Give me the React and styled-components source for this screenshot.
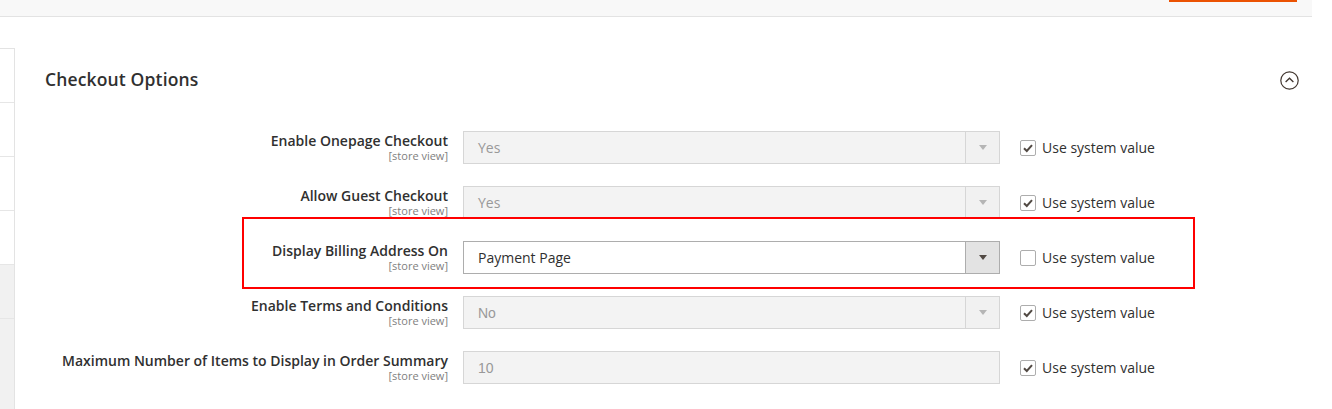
import { Fragment } from "react"
import styled, { createGlobalStyle } from "styled-components"

const GlobalStyle = createGlobalStyle`
    html, body {
        margin: 0;
        padding: 0;
        background: #fff;
        font-family: "Open Sans", "Liberation Sans", sans-serif;
        color: #303030;
    }
    * { box-sizing: border-box; }
`

const TopBar = styled.div`
    position: relative;
    height: 17px;
    margin-right: 20px;
    background: #f8f8f8;
    border-bottom: 1px solid #e3e3e3;
`

const SaveButtonEdge = styled.div`
    position: absolute;
    top: 0;
    left: 1169px;
    width: 128px;
    height: 2px;
    background: #eb5202;
`

const Main = styled.div`
    display: flex;
    align-items: stretch;
    height: 392px;
`

const Sidebar = styled.div`
    width: 15px;
    margin-top: 31px;
    border-right: 1px solid #e3e3e3;
    border-top: 1px solid #e3e3e3;
    display: flex;
    flex-direction: column;
    background: #f1f1f1;
`

const SideItem = styled.div`
    height: 54px;
    flex-shrink: 0;
    border-bottom: 1px solid #e6e6e6;
    background: ${p => (p.$shade ? "#f1f1f1" : "#fff")};
`

const Content = styled.div`
    flex: 1;
    position: relative;
    padding: 43px 33px 0 30px;
`

const Header = styled.div`
    display: flex;
    align-items: center;
    justify-content: space-between;
    height: 36px;
    padding-top: 1px;
`

const Title = styled.h2`
    margin: 0;
    font-size: 17.5px;
    font-weight: 600;
    color: #303030;
    letter-spacing: 0.15px;
`

const Toggle = styled.button`
    width: 19px;
    height: 19px;
    margin-top: 3px;
    padding: 0;
    border: 0;
    background: transparent;
    display: flex;
    cursor: pointer;
`

const Form = styled.div`
    position: relative;
    margin-top: 35px;
    display: grid;
    grid-template-columns: 403px 537px auto;
    column-gap: 15px;
    row-gap: 22px;
`

const LabelCell = styled.div`
    text-align: right;
    padding-top: 2px;
`

const Label = styled.div`
    font-size: 14px;
    font-weight: 600;
    line-height: 1.2;
    color: #303030;
`

const Scope = styled.div`
    margin-top: -1px;
    font-size: 11px;
    line-height: 1.2;
    color: #808080;
`

const Control = styled.div`
    height: 33px;
    display: flex;
    align-items: stretch;
    background: ${p => (p.$disabled ? "#f3f3f3" : "#fff")};
    border: 1px solid ${p => (p.$disabled ? "#d6d6d6" : "#adadad")};
`

const Value = styled.div`
    flex: 1;
    display: flex;
    align-items: center;
    padding: ${p => (p.$arial ? "1px 14px 0" : "0 14px 1px")};
    font-size: 14px;
    font-family: ${p => (p.$arial ? '"Liberation Sans", Arial, sans-serif' : '"Open Sans", sans-serif')};
    color: ${p => (p.$disabled ? "#999" : "#303030")};
`

const ArrowBox = styled.div`
    width: 34px;
    display: flex;
    align-items: center;
    justify-content: center;
    border-left: 1px solid ${p => (p.$disabled ? "#d6d6d6" : "#adadad")};
    background: ${p => (p.$disabled ? "#f1f1f1" : "#e3e3e3")};
`

const Arrow = styled.span`
    width: 0;
    height: 0;
    border-left: 4px solid transparent;
    border-right: 4px solid transparent;
    border-top: 5px solid ${p => (p.$disabled ? "#b5b5b5" : "#514943")};
`

const SystemCell = styled.label`
    display: flex;
    align-items: center;
    gap: 6px;
    padding-left: 5px;
    padding-bottom: 1px;
    height: 33px;
    font-size: 14px;
    color: #303030;
`

const Box = styled.span`
    width: 16px;
    height: 16px;
    border: 1px solid #adadad;
    border-radius: 2px;
    background: #fff;
    display: flex;
    align-items: center;
    justify-content: center;
    margin-top: 2px;
`

const Highlight = styled.div`
    position: absolute;
    left: 197px;
    top: 86px;
    width: 953px;
    height: 72px;
    border: 2px solid #f00;
    pointer-events: none;
`

const rows = [
    { label: "Enable Onepage Checkout", value: "Yes", type: "select", disabled: true, checked: true },
    { label: "Allow Guest Checkout", value: "Yes", type: "select", disabled: true, checked: true },
    { label: "Display Billing Address On", value: "Payment Page", type: "select", disabled: false, checked: false },
    { label: "Enable Terms and Conditions", value: "No", type: "select", disabled: true, checked: true, arial: true },
    { label: "Maximum Number of Items to Display in Order Summary", value: "10", type: "text", disabled: true, checked: true, arial: true },
]

function Checkbox({ checked }) {
    return (
        <Box>
            {checked && (
                <svg width="12" height="12" viewBox="0 0 12 12">
                    <polyline points="2,6.2 4.8,9 10,3.2" fill="none" stroke="#514943" strokeWidth="2" />
                </svg>
            )}
        </Box>
    )
}

export default function App() {
    return (
        <>
            <GlobalStyle />
            <TopBar>
                <SaveButtonEdge />
            </TopBar>
            <Main>
                <Sidebar>
                    <SideItem />
                    <SideItem />
                    <SideItem />
                    <SideItem />
                    <SideItem $shade />
                </Sidebar>
                <Content>
                    <Header>
                        <Title>Checkout Options</Title>
                        <Toggle aria-label="Collapse">
                            <svg width="19" height="19" viewBox="0 0 19 19">
                                <circle cx="9.5" cy="9.5" r="8.7" fill="none" stroke="#41362f" strokeWidth="1.2" />
                                <polyline points="5.6,11 9.5,7.2 13.4,11" fill="none" stroke="#41362f" strokeWidth="1.3" />
                            </svg>
                        </Toggle>
                    </Header>
                    <Form>
                        {rows.map(r => (
                            <Fragment key={r.label}>
                                <LabelCell>
                                    <Label>{r.label}</Label>
                                    <Scope>[store view]</Scope>
                                </LabelCell>
                                <Control $disabled={r.disabled}>
                                    <Value $disabled={r.disabled} $arial={r.arial}>{r.value}</Value>
                                    {r.type === "select" && (
                                        <ArrowBox $disabled={r.disabled}>
                                            <Arrow $disabled={r.disabled} />
                                        </ArrowBox>
                                    )}
                                </Control>
                                <SystemCell>
                                    <Checkbox checked={r.checked} />
                                    Use system value
                                </SystemCell>
                            </Fragment>
                        ))}
                        <Highlight />
                    </Form>
                </Content>
            </Main>
        </>
    )
}
